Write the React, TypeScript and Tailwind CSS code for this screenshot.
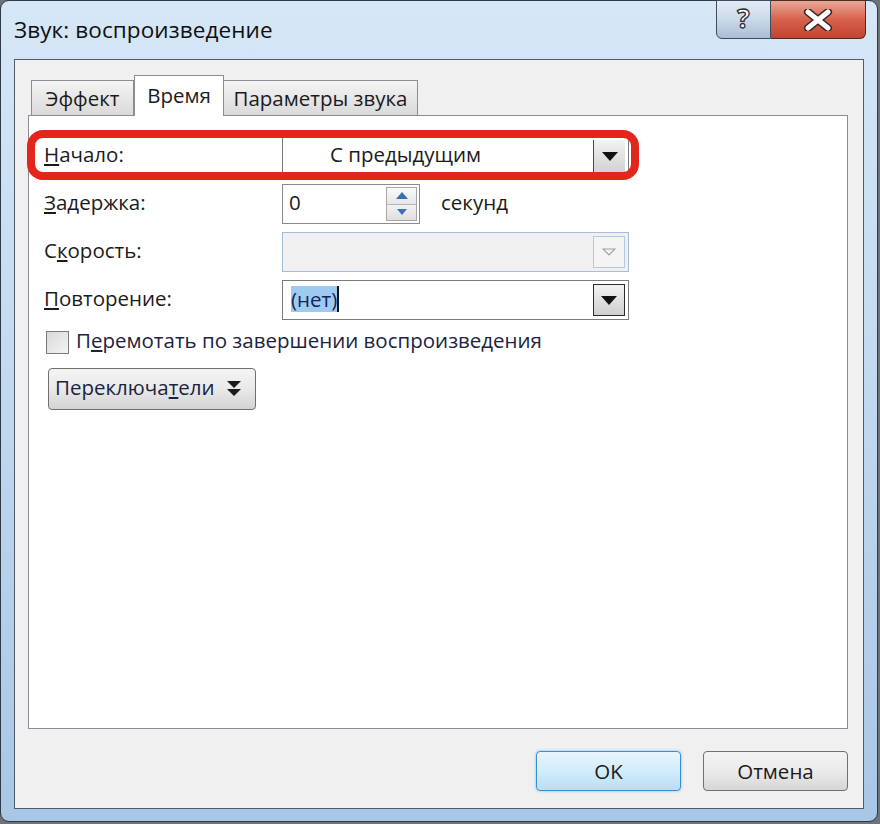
import React from "react";

const font = { fontFamily: '"Open Sans", "Noto Sans", "DejaVu Sans", sans-serif' };

function DropButton({ variant }: { variant: "normal" | "dark" | "disabled" }) {
  const box =
    variant === "disabled"
      ? "border border-[#b4c8de] bg-[#f4f4f4]"
      : variant === "dark"
      ? "border border-[#2b2b2b] bg-gradient-to-b from-[#f2f2f2] to-[#cfcfcf]"
      : "border-l border-[#4a4a4a] bg-gradient-to-b from-[#f3f3f3] to-[#d2d2d2]";
  return (
    <div className={`w-[32px] self-stretch my-[3px] mr-[3px] flex items-center justify-center ${box}`}>
      {variant === "disabled" ? (
        <svg width="14" height="8" viewBox="0 0 14 8">
          <path d="M1 1 L13 1 L7 7 Z" fill="none" stroke="#a0a0a0" strokeWidth="1.2" />
        </svg>
      ) : (
        <svg width="16" height="9" viewBox="0 0 16 9">
          <path d="M0 0 L16 0 L8 9 Z" fill="#111" />
        </svg>
      )}
    </div>
  );
}

function Row({ label, children }: { label: React.ReactNode; children: React.ReactNode }) {
  return (
    <div className="flex items-center h-[40px]">
      <div className="w-[238px] text-[20.5px] text-[#1b1b1b] mt-[-4px]">{label}</div>
      {children}
    </div>
  );
}

export default function App() {
  return (
    <div className="w-[880px] h-[824px] bg-[#6f7276]" style={font}>
      <div className="relative w-[878px] h-[822px] rounded-[9px] border border-[#2f3a47] bg-gradient-to-b from-[#d6e7f7] via-[#c0d8ef] to-[#a8c6e6] flex flex-col px-[13px] pb-[12px]">
        {/* title bar */}
        <div className="h-[58px] flex items-start">
          <div className="pt-[12px] text-[22.5px] text-[#101010] tracking-[0.1px]">Звук: воспроизведение</div>
          <div className="ml-auto mr-[-2px] flex mt-[-1px]">
            <div className="w-[55px] h-[39px] rounded-bl-[6px] border border-[#3e4c5e] bg-gradient-to-b from-[#e3ecf6] via-[#cbd9e9] to-[#a9bdd4] flex items-center justify-center">
              <span
                className="text-[26px] font-bold text-white leading-none mt-[-3px]"
                style={{ WebkitTextStroke: "1.3px #2a2f36" }}
              >
                ?
              </span>
            </div>
            <div className="w-[95px] h-[39px] rounded-br-[6px] border border-l-0 border-[#4a2b25] bg-gradient-to-b from-[#eaa899] via-[#d6614c] to-[#c24430] flex items-center justify-center">
              <svg width="30" height="22" viewBox="0 0 30 22">
                <path d="M5 3 L25 19 M25 3 L5 19" stroke="#3a2420" strokeWidth="8" strokeLinecap="round" />
                <path d="M5 3 L25 19 M25 3 L5 19" stroke="#ffffff" strokeWidth="5" strokeLinecap="round" />
              </svg>
            </div>
          </div>
        </div>

        {/* client area */}
        <div className="flex-1 bg-[#f0f0f0] border border-[#4f5b69] flex flex-col pl-[13px] pr-[15px] pt-[14px] pb-[17px]">
          {/* tabs */}
          <div className="flex items-end pl-[3px] h-[41px] relative z-10">
            <div className="w-[103px] h-[35px] border border-b-0 border-[#8a8d94] bg-gradient-to-b from-[#f4f4f4] to-[#dadada] flex items-center justify-center text-[20.5px] text-[#1b1b1b]">
              Эффект
            </div>
            <div className="w-[90px] h-[41px] border border-b-0 border-[#8a8d94] bg-white flex items-start justify-center pt-[4px] text-[20.5px] text-[#1b1b1b] mb-[-1px]">
              Время
            </div>
            <div className="w-[194px] h-[35px] border border-b-0 border-l-0 border-[#8a8d94] bg-gradient-to-b from-[#f4f4f4] to-[#dadada] flex items-center justify-center text-[20.5px] text-[#1b1b1b]">
              Параметры звука
            </div>
          </div>

          {/* panel */}
          <div className="relative flex-1 bg-white border border-[#898c95] pl-[15px] pt-[20px] flex flex-col gap-[8px]">
            {/* red annotation */}
            <div className="absolute left-[-2px] top-[14px] w-[612px] h-[50px] rounded-[16px] border-[8px] border-[#e3261c] pointer-events-none z-10" />

            <Row label={<span><u>Н</u>ачало:</span>}>
              <div className="w-[347px] h-[40px] border border-[#7a7a7a] bg-white flex items-center">
                <div className="flex-1 pl-[47px] text-[20.5px] text-[#1b1b1b] mt-[-3px]">С предыдущим</div>
                <DropButton variant="normal" />
              </div>
            </Row>

            <Row label={<span><u>З</u>адержка:</span>}>
              <div className="w-[138px] h-[40px] border border-[#8c8c8c] bg-white flex items-center">
                <div className="flex-1 pl-[6px] text-[20.5px] text-[#1b1b1b] mt-[-3px]">0</div>
                <div className="w-[31px] self-stretch my-[2px] mr-[2px] flex flex-col border border-[#a7a7a7]">
                  <div className="flex-1 flex items-center justify-center bg-gradient-to-b from-[#fafafa] to-[#e6e6e6] border-b border-[#b5b5b5]">
                    <svg width="12" height="7" viewBox="0 0 12 7">
                      <path d="M0 7 L12 7 L6 0 Z" fill="#3c6fb5" />
                    </svg>
                  </div>
                  <div className="flex-1 flex items-center justify-center bg-gradient-to-b from-[#f2f2f2] to-[#dedede]">
                    <svg width="10" height="6" viewBox="0 0 10 6">
                      <path d="M0 0 L10 0 L5 6 Z" fill="#3c6fb5" />
                    </svg>
                  </div>
                </div>
              </div>
              <div className="ml-[21px] text-[20.5px] text-[#1b1b1b] mt-[-3px]">секунд</div>
            </Row>

            <Row label={<span>С<u>к</u>орость:</span>}>
              <div className="w-[347px] h-[40px] border border-[#a6bbd4] bg-[#f0f0f0] flex items-center justify-end">
                <DropButton variant="disabled" />
              </div>
            </Row>

            <Row label={<span><u>П</u>овторение:</span>}>
              <div className="w-[347px] h-[40px] border border-[#7a7a7a] bg-white flex items-center">
                <div className="flex-1 pl-[8px] flex items-center mt-[-2px]">
                  <span className="bg-[#9fcaf0] text-[20.5px] text-[#14245a] leading-[26px]">(нет)</span>
                  <span className="w-[2px] h-[26px] bg-[#111]" />
                </div>
                <DropButton variant="dark" />
              </div>
            </Row>

            <div className="flex items-center mt-[1px] h-[26px]">
              <div className="ml-[2px] w-[23px] h-[23px] border border-[#7b7b7b] bg-gradient-to-br from-[#d9d9d9] to-[#f4f4f4]" />
              <div className="ml-[7px] text-[20.5px] text-[#1c2340] mt-[-4px]">
                П<u>е</u>ремотать по завершении воспроизведения
              </div>
            </div>

            <div className="mt-[5px] ml-[4px] w-[208px] h-[42px] rounded-[4px] border border-[#6f6f6f] bg-gradient-to-b from-[#f4f4f4] via-[#e9e9e9] to-[#d3d3d3] flex items-center pl-[6px]">
              <span className="text-[20.5px] text-[#1c2340] mt-[-3px]">
                Переключа<u>т</u>ели
              </span>
              <svg className="ml-[12px]" width="14" height="18" viewBox="0 0 14 18">
                <path d="M0 1 L14 1 L7 8 Z M0 9 L14 9 L7 16 Z" fill="#1b1b1b" />
              </svg>
            </div>
          </div>

          {/* buttons */}
          <div className="flex justify-end gap-[22px] mt-[22px]">
            <div className="w-[145px] h-[40px] rounded-[4px] border border-[#3a8fc7] bg-gradient-to-b from-[#e8f5fd] via-[#d2ecfb] to-[#b8def5] shadow-[0_0_3px_#6ec3ee] flex items-center justify-center text-[20.5px] text-[#1b1b1b]">
              OK
            </div>
            <div className="w-[145px] h-[40px] rounded-[4px] border border-[#707070] bg-gradient-to-b from-[#f3f3f3] via-[#ebebeb] to-[#d6d6d6] flex items-center justify-center text-[20.5px] text-[#1b1b1b]">
              Отмена
            </div>
          </div>
        </div>
      </div>
    </div>
  );
}
